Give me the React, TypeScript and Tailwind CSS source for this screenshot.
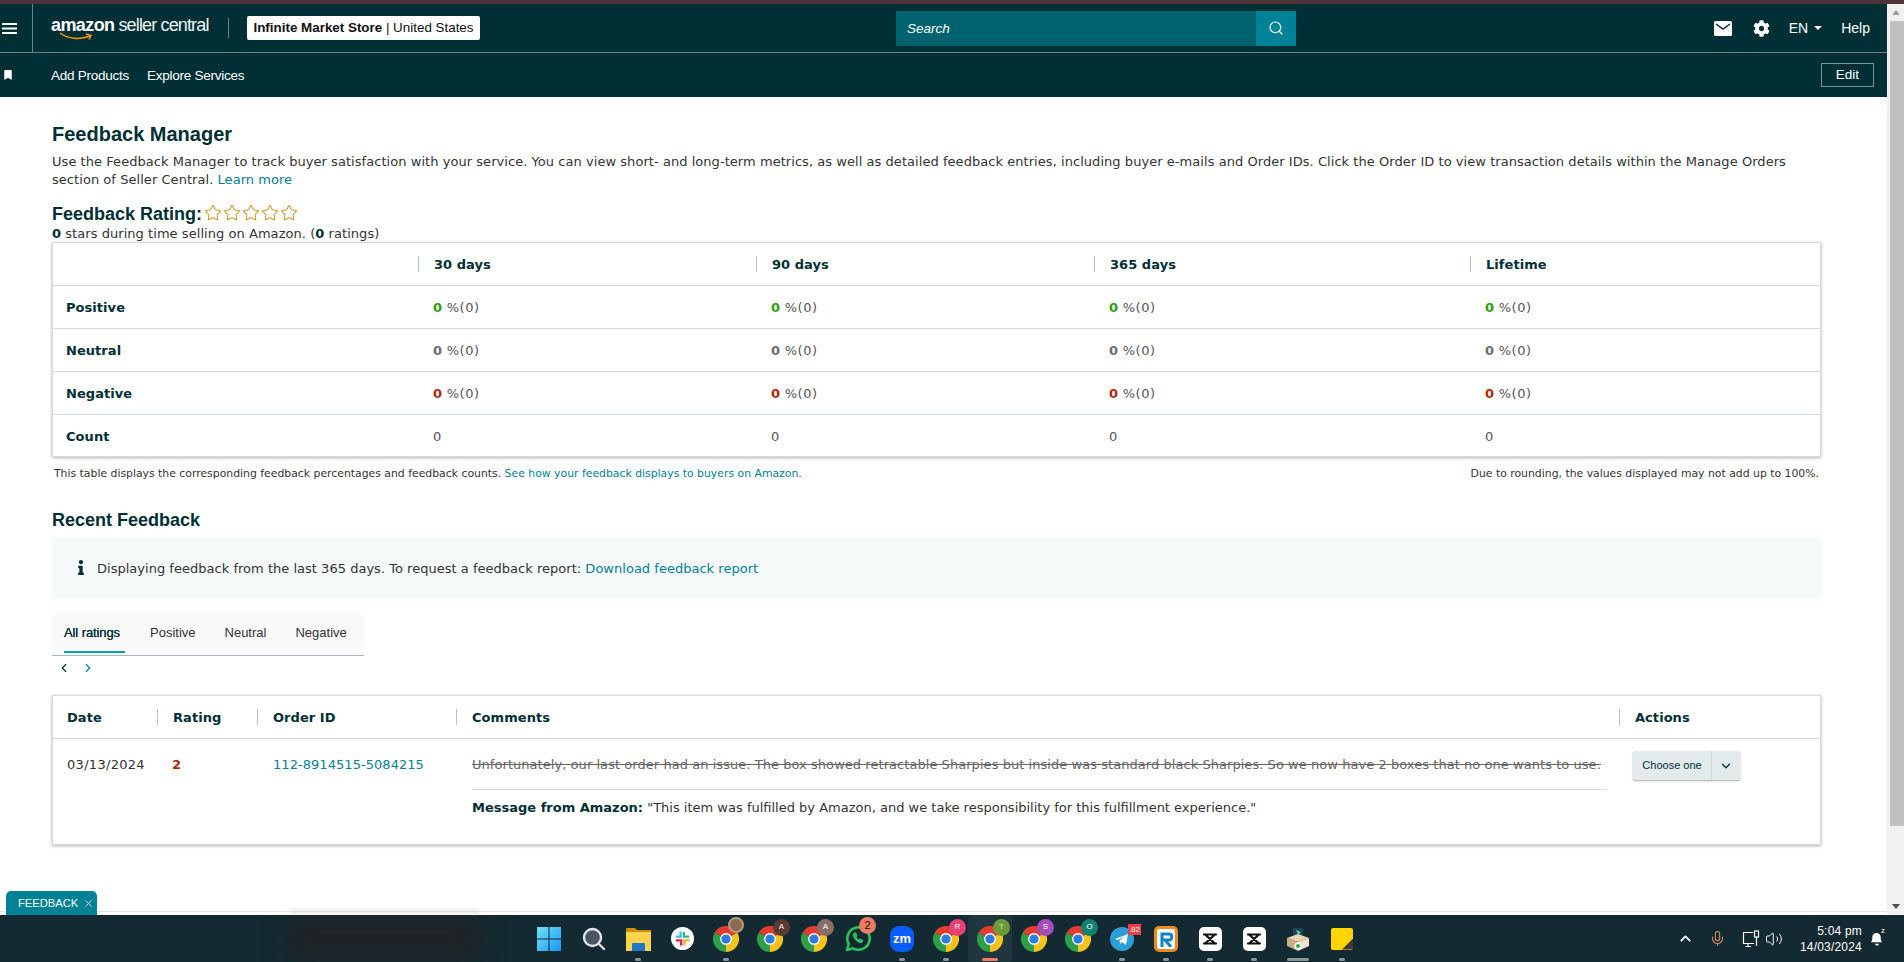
import React from "react";
import { FaBookmark, FaCog, FaInfo } from "react-icons/fa";
import { ChevronDown, ChevronLeft, ChevronRight, Mic, Search, Star, Volume2, ChevronUp, X } from "lucide-react";

const ember = "font-['Liberation_Sans',Arial,sans-serif] tracking-normal";
const body = "font-['DejaVu_Sans',Verdana,sans-serif] tracking-[.05px]";

function Chrome({ size = 26 }: { size?: number }) {
  return (
    <svg width={size} height={size} viewBox="0 0 48 48">
      <path d="M24 24 L3.2 12 A24 24 0 0 1 44.8 12 Z" fill="#e33b2e" />
      <path d="M24 24 L44.8 12 A24 24 0 0 1 24 48 Z" fill="#f6c21c" />
      <path d="M24 24 L24 48 A24 24 0 0 1 3.2 12 Z" fill="#2e9e47" />
      <circle cx="24" cy="24" r="11" fill="#fff" />
      <circle cx="24" cy="24" r="8.5" fill="#2a7de1" />
    </svg>
  );
}

function ChromeB({ label, color, text = "#fff" }: { label: string; color: string; text?: string }) {
  return (
    <span className="relative block w-[26px] h-[26px]">
      <Chrome />
      <span
        className="absolute -top-[7px] -right-[7px] w-[17px] h-[17px] rounded-full flex items-center justify-center text-[8px] font-['Liberation_Sans',sans-serif]"
        style={{ backgroundColor: color, color: text }}
      >
        {label}
      </span>
    </span>
  );
}

function Slot({ children, dot, wide, active }: { children: React.ReactNode; dot?: boolean; wide?: boolean; active?: boolean }) {
  return (
    <div className={`relative w-[44px] h-[47px] flex items-center justify-center ${active ? "bg-[#1f363e] rounded" : ""}`}>
      {children}
      {dot && !active && <span className={`absolute bottom-[1px] h-[3px] rounded-full bg-[#8a9599] ${wide ? "w-[22px]" : "w-[6px]"}`} />}
      {active && <span className="absolute bottom-[1px] h-[3px] w-[16px] rounded-full bg-[#ee7c63]" />}
    </div>
  );
}

function Capcut() {
  return (
    <span className="w-[23px] h-[24px] rounded-[5px] bg-white flex items-center justify-center">
      <svg width="16" height="14" viewBox="0 0 16 14" fill="none" stroke="#111" strokeWidth="2.2" strokeLinecap="round">
        <path d="M2 2.500H14M2 11.500H14M3 2.500L13 11.500M13 2.500L3 11.500" />
      </svg>
    </span>
  );
}

function Taskbar() {
  return (
    <div className="h-[47px] bg-[#132a32] flex items-center relative shrink-0 overflow-hidden">
      <div className="absolute left-[290px] top-0 w-[190px] h-full bg-[#1f2426] blur-md" />
      <div className="relative ml-[528px] flex items-center">
        <Slot>
          <svg width="24" height="24" viewBox="0 0 24 24" className="-ml-[2px]">
            <defs>
              <linearGradient id="w" x1="0" y1="0" x2="1" y2="1">
                <stop offset="0" stopColor="#6fe3fb" />
                <stop offset="1" stopColor="#1a94f0" />
              </linearGradient>
            </defs>
            <path d="M0 0h11.5v11.5H0zM12.5 0H24v11.5H12.5zM0 12.5h11.5V24H0zM12.5 12.5H24V24H12.5z" fill="url(#w)" />
          </svg>
        </Slot>
        <Slot>
          <svg width="24" height="24" viewBox="0 0 24 24" fill="#47585e" stroke="#e3e6e7" strokeWidth="2.4" strokeLinecap="round">
            <circle cx="10.5" cy="10.5" r="8.5" />
            <path d="M17 17l5 5" fill="none" />
          </svg>
        </Slot>
        <Slot dot>
          <svg width="25" height="24" viewBox="0 0 25 24">
            <path d="M0 2a1 1 0 0 1 1-1h8l2 2h14v5H0z" fill="#c98f0c" />
            <path d="M0 5h25v19H0z" fill="#fbd44b" />
            <path d="M7 16h11a1 1 0 0 1 1 1v7H6v-7a1 1 0 0 1 1-1z" fill="#1f78c8" />
          </svg>
        </Slot>
        <Slot>
          <span className="w-[23px] h-[23px] rounded-full bg-white flex items-center justify-center">
            <svg width="15" height="15" viewBox="0 0 16 16" strokeWidth="2.6" strokeLinecap="round">
              <path d="M6 1.500v4.500H2" stroke="#36c5f0" fill="none" />
              <path d="M14 6h-4.500V2" stroke="#2eb67d" fill="none" />
              <path d="M10 14.500V10h4.500" stroke="#ecb22e" fill="none" />
              <path d="M2 10h4.500v4.500" stroke="#e01e5a" fill="none" />
            </svg>
          </span>
        </Slot>
        <Slot dot>
          <span className="relative block w-[26px] h-[26px]">
            <Chrome />
            <span className="absolute -top-[9px] -right-[5px] w-[16px] h-[16px] rounded-full bg-[#8b6a50] border-2 border-[#b79a7f]" />
          </span>
        </Slot>
        <Slot><ChromeB label="A" color="#5b3a33" /></Slot>
        <Slot><ChromeB label="A" color="#8a6f66" /></Slot>
        <Slot>
          <span className="relative block">
            <svg width="26" height="27" viewBox="0 0 26 27" fill="none" stroke="#29c45b" strokeWidth="2.6" strokeLinejoin="round">
              <path d="M2 25l1.700-6A11.200 11.200 0 1 1 8 23.300z" />
              <path d="M9 8c-1 1-1 3 1 6s5 4 7 3.500l1-2-3-1.500-1 1c-1.500-.5-2.500-2-3-3l1-1-1.200-3z" fill="#29c45b" strokeWidth="1" />
            </svg>
            <span className="absolute -top-[8px] -right-[5px] w-[17px] h-[17px] rounded-full bg-[#ee7c63] text-[#111] text-[11px] flex items-center justify-center font-['Liberation_Sans',sans-serif]">2</span>
          </span>
        </Slot>
        <Slot dot>
          <span className="w-[24px] h-[26px] rounded-[9px] bg-[#0b5cff] text-white text-[13px] font-bold flex items-center justify-center font-['Liberation_Sans',sans-serif]">zm</span>
        </Slot>
        <Slot dot><ChromeB label="R" color="#e93f77" /></Slot>
        <Slot active><ChromeB label="T" color="#6b9a3a" text="#cfe3b5" /></Slot>
        <Slot><ChromeB label="S" color="#a44db8" /></Slot>
        <Slot><ChromeB label="O" color="#12806f" /></Slot>
        <Slot dot>
          <span className="relative block">
            <svg width="24" height="24" viewBox="0 0 24 24">
              <circle cx="12" cy="12" r="12" fill="#2a9fd8" />
              <path d="M5 12l13-5-2 11-4-3-2 2-.500-3.500 5.500-4.500-7 4z" fill="#fff" />
            </svg>
            <span className="absolute -top-[3px] -right-[7px] px-[1px] h-[11px] bg-[#ef3e42] text-white text-[8px] leading-[11px] font-['Liberation_Sans',sans-serif]">.82</span>
          </span>
        </Slot>
        <Slot dot>
          <span className="w-[24px] h-[26px] rounded-[5px] border-[3px] border-[#f08a1d] bg-white flex items-center justify-center">
            <svg width="14" height="16" viewBox="0 0 14 16" fill="none" stroke="#0f83c9" strokeWidth="3">
              <path d="M3 16V3h7a2.500 2.500 0 0 1 0 6H6l6 7" />
            </svg>
          </span>
        </Slot>
        <Slot dot><Capcut /></Slot>
        <Slot dot><Capcut /></Slot>
        <Slot dot wide>
          <svg width="24" height="26" viewBox="0 0 24 26">
            <path d="M7 2h10v9H7z" fill="#1d4353" />
            <path d="M10 4l5 2-3 3z" fill="#59c4c9" />
            <path d="M1 12l11-4 11 4-11 4z" fill="#e8d5b5" />
            <path d="M1 12v8l11 5V16z" fill="#cbae85" />
            <path d="M23 12v8l-11 5V16z" fill="#efe3cd" />
            <circle cx="12" cy="20" r="3.500" fill="#fff" />
            <circle cx="12" cy="20" r="2" fill="#2aa84f" />
          </svg>
        </Slot>
        <Slot dot>
          <span className="relative block w-[22px] h-[22px] bg-[#ffd400] rounded-[2px]">
            <span className="absolute right-0 bottom-0 w-[11px] h-[11px] bg-[#3a3a3a] [clip-path:polygon(100%_0,100%_100%,0_100%)]" />
          </span>
        </Slot>
      </div>
      <div className="flex-1" />
      <div className="flex items-center text-white pr-[20px] font-['Liberation_Sans',sans-serif]">
        <ChevronUp className="w-[17px] h-[17px] mr-[15px]" strokeWidth={2.5} />
        <Mic className="w-[17px] h-[17px] mr-[16px] text-[#e08a60]" strokeWidth={1.5} />
        <svg className="mr-[5px]" width="18" height="18" viewBox="0 0 18 18" fill="none" stroke="#fff" strokeWidth="1.200">
          <path d="M12 13.500H1.500V2.500H11M6 13.500v3M3.500 16.500h5.500" />
          <rect x="12.500" y="1" width="4" height="6" fill="#132a32" />
          <path d="M14.500 7v9" />
        </svg>
        <Volume2 className="w-[18px] h-[18px] mr-[17px]" strokeWidth={1.3} />
        <div className="text-right text-[12px] leading-[16px] mr-[8px] tracking-[.2px]">
          <div>5:04 pm</div>
          <div>14/03/2024</div>
        </div>
        <span className="relative block w-[14px] h-[17px]">
          <svg width="14" height="17" viewBox="0 0 15 17" fill="#fff">
            <path d="M1 12.500c1.500-1.500 1.500-3 1.500-5.500a4.500 4.500 0 0 1 9 0c0 2.500 0 4 1.500 5.500zM5.500 14h4a2 2 0 0 1-4 0z" />
          </svg>
          <span className="absolute -top-[3px] -right-[1px] text-[8px] leading-[8px] bg-[#132a32]">z</span>
        </span>
      </div>
    </div>
  );
}

function Header() {
  return (
    <div className={`bg-[#002f36] text-white shrink-0 ${ember}`}>
      <div className="h-[49px] flex items-center border-b border-[#6d7f83]">
        <div className="w-[33px] h-full border-r border-[#6d7f83] flex items-center pl-[2px]">
          <svg width="15" height="11" viewBox="0 0 15 11" fill="#fff">
            <path d="M0 0h15v2H0zM0 4.500h15v2H0zM0 9h15v2H0z" />
          </svg>
        </div>
        <div className="ml-[18px] w-[160px] relative h-[30px] flex items-start leading-[24px] whitespace-nowrap">
          <span className="font-bold text-[18px] tracking-[-.6px]">amazon</span>
          <span className="text-[18px] tracking-[-.85px] ml-[4px] text-[#eef2f2]">seller central</span>
          <svg className="absolute left-[8px] top-[19px]" width="34" height="9" viewBox="0 0 34 9" fill="none" stroke="#ff9900" strokeWidth="1.500">
            <path d="M1 1c8 6 20 7 30 3M27 2l5 1.500-2 4" />
          </svg>
        </div>
        <div className="ml-[17px] w-px h-[20px] bg-[#6d7f83]" />
        <div className="ml-[18px] h-[24px] w-[233px] bg-white rounded-[2px] text-[#0f1111] text-[13.400px] flex items-center justify-center whitespace-nowrap">
          <span className="font-bold pt-[1px]">Infinite Market Store</span>
          <span className="pt-[1px]">&nbsp;| United States</span>
        </div>
        <div className="ml-[416px] h-[35px] w-[360px] bg-[#00626f] italic text-[13.500px] flex items-center pl-[11px] pt-[2px]">Search</div>
        <div className="h-[35px] w-[40px] bg-[#008296] flex items-center justify-center">
          <Search className="w-[16px] h-[16px]" strokeWidth={1.8} />
        </div>
        <div className="flex-1" />
        <svg className="mr-[21px]" width="18" height="15" viewBox="0 0 18 15">
          <rect width="18" height="15" rx="1.500" fill="#fff" />
          <path d="M2 3l7 5 7-5" fill="none" stroke="#002f36" strokeWidth="1.500" />
        </svg>
        <FaCog className="w-[17px] h-[17px] mr-[19px]" />
        <span className="text-[14px] mr-[6px]">EN</span>
        <span className="w-0 h-0 border-x-[4px] border-x-transparent border-t-[4px] border-t-white mr-[19px]" />
        <span className="text-[14px] mr-[17px]">Help</span>
      </div>
      <div className="h-[44px] flex items-center text-[13.500px]">
        <FaBookmark className="w-[8px] h-[10px] ml-[4px]" />
        <span className="ml-[39px] mt-[2px] tracking-[-.25px]">Add Products</span>
        <span className="ml-[18px] mt-[2px] tracking-[-.25px]">Explore Services</span>
        <div className="flex-1" />
        <div className="w-[53px] h-[24px] border border-[#7f9195] flex items-center justify-center text-[13.500px] mr-[13px]">Edit</div>
      </div>
    </div>
  );
}

const cols = [
  { name: "30 days" },
  { name: "90 days" },
  { name: "365 days" },
  { name: "Lifetime" },
];

function Cell({ children, first }: { children: React.ReactNode; first?: boolean }) {
  return <div className={`flex items-center h-full pt-[2px] ${first ? "pl-[13px]" : "pl-[15px]"}`}>{children}</div>;
}

function Metric({ label, color }: { label: string; color: string }) {
  return (
    <div className="grid grid-cols-[365px_338px_338px_376px_1fr] h-[43px] items-center border-b border-[#d5dbdb]">
      <Cell first><span className="font-bold text-[#002f36]">{label}</span></Cell>
      {cols.map((c) => (
        <Cell key={c.name}>
          <span className={`font-bold ${color}`}>0</span>
          <span className="text-[#555] tracking-[.5px]">&nbsp;%(0)</span>
        </Cell>
      ))}
    </div>
  );
}

function Th({ children, w }: { children: React.ReactNode; w?: string }) {
  return (
    <div className={`flex items-center h-full ${w ?? ""}`}>
      <span className="w-px h-[16px] bg-[#b9c2c3] mr-[15px]" />
      <span className="font-bold text-[#002f36] pt-[2px]">{children}</span>
    </div>
  );
}

function Main() {
  return (
    <div className={`flex-1 bg-white text-[13px] leading-[18px] text-[#0f1111] pl-[52px] pr-[66px] relative overflow-hidden ${body}`}>
      <h1 className={`mt-[25px] text-[20px] leading-[24px] font-bold text-[#002f36] ${ember}`}>Feedback Manager</h1>
      <p className="mt-[7px] text-[13px] leading-[18px] text-[#333]">
        Use the Feedback Manager to track buyer satisfaction with your service. You can view short- and long-term metrics, as well as detailed feedback entries, including buyer e-mails and Order IDs. Click the Order ID to view transaction details within the Manage Orders section of Seller Central. <span className="text-[#008296]">Learn more</span>
      </p>
      <div className="mt-[13px] flex items-center h-[24px]">
        <span className={`text-[18px] font-bold text-[#002f36] ${ember}`}>Feedback Rating:</span>
        <span className="flex ml-[2px] mb-[3px] gap-[1px]">
          {[0, 1, 2, 3, 4].map((i) => (
            <Star key={i} className="w-[18px] h-[18px] text-[#d19a2a]" strokeWidth={1.4} />
          ))}
        </span>
      </div>
      <div className="h-[16px] leading-[16px] text-[#333]">
        <b className="text-[#002f36]">0</b> stars during time selling on Amazon. (<b className="text-[#002f36]">0</b> ratings)
      </div>
      <div className="border border-[#d5dbdb] shadow-[0_1px_3px_rgba(0,0,0,.3)]">
        <div className="grid grid-cols-[365px_338px_338px_376px_1fr] h-[43px] items-center border-b border-[#d5dbdb]">
          <div />
          {cols.map((c) => (
            <Th key={c.name}>{c.name}</Th>
          ))}
        </div>
        <Metric label="Positive" color="text-[#2f9d0d]" />
        <Metric label="Neutral" color="text-[#6b6b6b]" />
        <Metric label="Negative" color="text-[#b12704]" />
        <div className="grid grid-cols-[365px_338px_338px_376px_1fr] h-[41px] items-center">
          <Cell first><span className="font-bold text-[#002f36]">Count</span></Cell>
          {cols.map((c) => (
            <Cell key={c.name}><span className="text-[#555]">0</span></Cell>
          ))}
        </div>
      </div>
      <div className="mt-[9px] flex justify-between text-[10.850px] leading-[16px] tracking-normal px-[2px] text-[#333]">
        <span>This table displays the corresponding feedback percentages and feedback counts. <span className="text-[#008296]">See how your feedback displays to buyers on Amazon.</span></span>
        <span>Due to rounding, the values displayed may not add up to 100%.</span>
      </div>
      <h2 className={`mt-[27px] text-[18px] leading-[22px] font-bold text-[#002f36] ${ember}`}>Recent Feedback</h2>
      <div className="mt-[7px] h-[60px] bg-[#f5f9fa] flex items-center pl-[26px] text-[#333]">
        <FaInfo className="w-[6px] h-[15px] text-[#002f36] mr-[13px] mb-[2px]" />
        <span className="pt-[1px] tracking-[.02px]">Displaying feedback from the last 365 days. To request a feedback report: <span className="text-[#008296]">Download feedback report</span></span>
      </div>
      <div className={`mt-[14px] w-[312px] h-[44px] bg-[#fafafa] border-b border-[#aab7b8] flex gap-[29px] pl-[12px] text-[13px] text-[#333] ${ember}`}>
        <div className="relative pt-[12px] text-[#002f36] tracking-[-.1px] [text-shadow:0_0_.5px_#002f36] whitespace-nowrap">
          All ratings
          <span className="absolute left-0 -right-[5px] bottom-[2px] h-[2px] bg-[#00a4b4]" />
        </div>
        <div className="pt-[12px] ml-[1px]">Positive</div>
        <div className="pt-[12px]">Neutral</div>
        <div className="pt-[12px]">Negative</div>
      </div>
      <div className="h-[22px] flex items-center pl-[5px] gap-[10px] pt-[1px]">
        <ChevronLeft className="w-[14px] h-[14px] text-[#002f36]" strokeWidth={2} />
        <ChevronRight className="w-[14px] h-[14px] text-[#008296]" strokeWidth={2} />
      </div>
      <div className="mt-[17px] h-[150px] border border-[#d5dbdb] shadow-[0_1px_3px_rgba(0,0,0,.3)]">
        <div className="flex h-[43px] items-center border-b border-[#d5dbdb]">
          <div className="w-[104px] pl-[14px] pt-[2px] font-bold text-[#002f36]">Date</div>
          <Th w="w-[100px]">Rating</Th>
          <Th w="w-[199px]">Order ID</Th>
          <Th w="w-[1163px]">Comments</Th>
          <Th>Actions</Th>
        </div>
        <div className="flex">
          <div className="w-[104px] pl-[14px] pt-[17px] text-[#333] tracking-[.3px] whitespace-nowrap">03/13/2024</div>
          <div className="w-[100px] pl-[15px] pt-[17px] font-bold text-[#b12704]">2</div>
          <div className="w-[199px] pl-[16px] pt-[17px] text-[#008296] whitespace-nowrap">112-8914515-5084215</div>
          <div className="w-[1135px] ml-[16px]">
            <div className="pt-[17px] h-[51px] border-b border-[#d5dbdb] line-through text-[#666] whitespace-nowrap">
              Unfortunately, our last order had an issue. The box showed retractable Sharpies but inside was standard black Sharpies. So we now have 2 boxes that no one wants to use.
            </div>
            <div className="pt-[9px] text-[#333] tracking-normal whitespace-nowrap">
              <b className="text-[#002f36]">Message from Amazon:</b> "This item was fulfilled by Amazon, and we take responsibility for this fulfillment experience."
            </div>
          </div>
          <div className={`ml-[26px] mt-[12px] w-[107px] h-[29px] rounded-[2px] bg-[#e3eaeb] shadow-[0_1px_2px_rgba(0,0,0,.35)] flex items-center text-[11px] text-[#002f36] ${ember}`}>
            <span className="w-[79px] text-center border-r border-[#d3dcdd] leading-[29px]">Choose one</span>
            <ChevronDown className="w-[14px] h-[14px] ml-[7px]" strokeWidth={2.2} />
          </div>
        </div>
      </div>
      <div className="absolute left-0 right-0 bottom-[3px] h-px bg-[#e6e6e6]" />
      <div className="absolute left-[290px] w-[190px] bottom-[2px] h-[3px] bg-[#dcdcdc] blur-[2px]" />
      <div className={`absolute left-[6px] bottom-0 w-[91px] h-[24px] bg-[#008296] rounded-t-[5px] text-white text-[11.200px] flex items-center pl-[12px] ${ember}`}>
        FEEDBACK
        <X className="w-[11px] h-[11px] ml-[5px]" strokeWidth={1.8} />
      </div>
    </div>
  );
}

function Scrollbar() {
  return (
    <div className="w-[17px] bg-[#f1f1f1] shrink-0 flex flex-col items-end">
      <div className="h-[17px] w-full flex items-center justify-center">
        <span className="w-0 h-0 border-x-[4px] border-x-transparent border-b-[5px] border-b-[#a3a3a3]" />
      </div>
      <div className="w-[14px] h-[805px] bg-[#c1c1c1]" />
      <div className="flex-1" />
      <div className="h-[17px] w-full flex items-center justify-center">
        <span className="w-0 h-0 border-x-[4px] border-x-transparent border-t-[5px] border-t-[#505050]" />
      </div>
    </div>
  );
}

export default function App() {
  return (
    <div className="h-[962px] w-[1904px] overflow-hidden flex flex-col">
      <div className="h-[4px] bg-[#4f3338] shrink-0" />
      <div className="flex-1 flex min-h-0">
        <div className="flex-1 flex flex-col min-w-0">
          <Header />
          <Main />
        </div>
        <Scrollbar />
      </div>
      <Taskbar />
    </div>
  );
}
